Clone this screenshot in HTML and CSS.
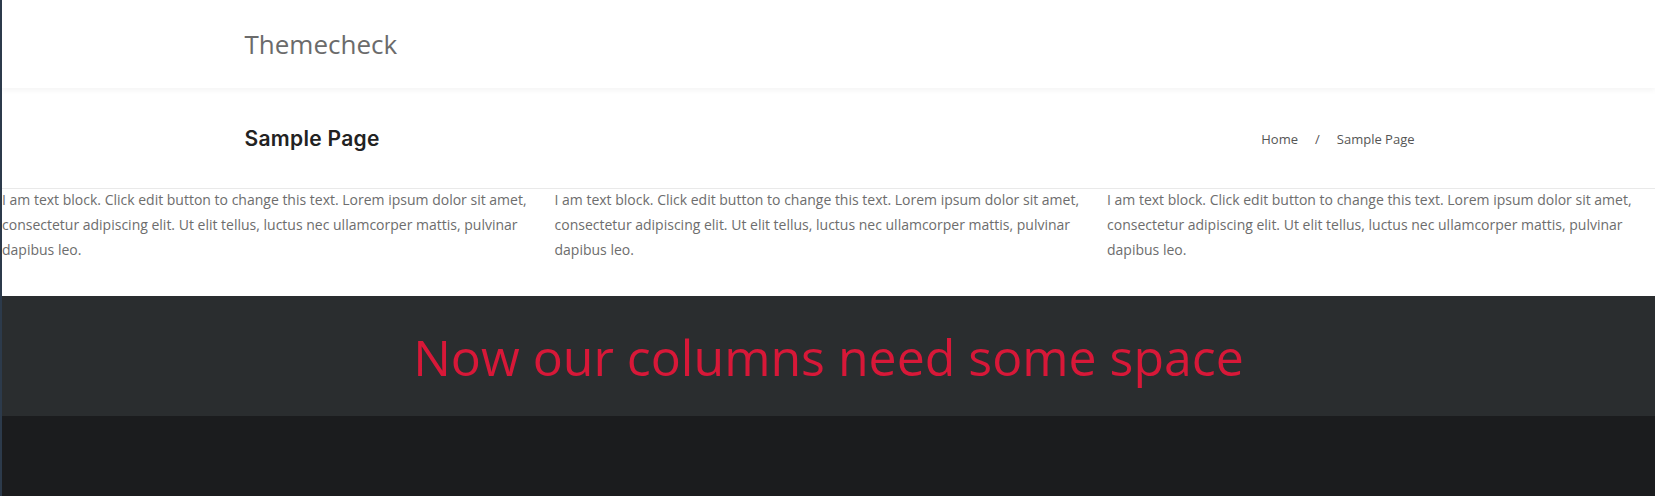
FILE: index.html
```html
<!DOCTYPE html>
<html lang="en">
<head>
  <meta charset="UTF-8">
  <meta name="viewport" content="width=device-width, initial-scale=1.0">
  <title>Sample Page – Themecheck</title>
  <link rel="stylesheet" href="styles.css">
</head>
<body>

  <header class="site-header">
    <div class="container">
      <a class="site-title" href="#">Themecheck</a>
    </div>
  </header>

  <section class="page-title">
    <div class="container title-row">
      <h1>Sample Page</h1>
      <nav class="breadcrumb">
        <a href="#">Home</a>
        <span class="sep">/</span>
        <span>Sample Page</span>
      </nav>
    </div>
  </section>

  <section class="text-columns">
    <div class="col">
      <p>I am text block. Click edit button to change this text. Lorem ipsum dolor sit amet, consectetur adipiscing elit. Ut elit tellus, luctus nec ullamcorper mattis, pulvinar dapibus leo.</p>
    </div>
    <div class="col">
      <p>I am text block. Click edit button to change this text. Lorem ipsum dolor sit amet, consectetur adipiscing elit. Ut elit tellus, luctus nec ullamcorper mattis, pulvinar dapibus leo.</p>
    </div>
    <div class="col">
      <p>I am text block. Click edit button to change this text. Lorem ipsum dolor sit amet, consectetur adipiscing elit. Ut elit tellus, luctus nec ullamcorper mattis, pulvinar dapibus leo.</p>
    </div>
  </section>

  <section class="banner">
    <h2>Now our columns need some space</h2>
  </section>

  <footer class="site-footer"></footer>

</body>
</html>
```

FILE: styles.css
```css
html {
  background-color: #1b1c1e;
}

body {
  margin: 0;
  padding: 0;
  min-height: 100vh;
  border-left: 2px solid #2c3a4b;
  background-color: #1b1c1e;
  font-family: "Open Sans", Arial, sans-serif;
  color: #6d6d6d;
}

a {
  color: inherit;
  text-decoration: none;
}

.container {
  width: 1170px;
  margin: 0 auto;
  padding-left: 2px;
}

/* header */
.site-header {
  position: relative;
  z-index: 2;
  height: 88px;
  display: flex;
  align-items: center;
  background: #fff;
  box-shadow: 0 2px 6px rgba(0, 0, 0, 0.05);
}

.site-title {
  font-size: 26px;
  line-height: 36px;
  color: #6b6b6b;
}

/* page title bar */
.page-title {
  background: #fff;
  border-bottom: 1px solid #e9e9e9;
}

.title-row {
  height: 100px;
  display: flex;
  justify-content: space-between;
  align-items: center;
}

.title-row h1 {
  margin: 0;
  font-family: Inter, "Noto Sans", sans-serif;
  font-size: 21px;
  font-weight: 600;
  letter-spacing: 0.3px;
  color: #222;
}

.breadcrumb {
  display: flex;
  align-items: center;
  gap: 17px;
  font-size: 13px;
  color: #555;
  padding-top: 2px;
}

/* text columns */
.text-columns {
  display: grid;
  grid-template-columns: repeat(3, 1fr);
  column-gap: 4.5px;
  background: #fff;
  padding: 0 0 34px;
}

.col p {
  margin: -2px 0 0;
  font-size: 14px;
  line-height: 25px;
  color: #6d6d6d;
}

/* banner */
.banner {
  background: #2a2d2f;
  padding: 27px 0 24px;
  text-align: center;
}

.banner h2 {
  margin: 0;
  font-size: 50px;
  font-weight: 400;
  line-height: 69px;
  color: #d71838;
}

.site-footer {
  background: #1b1c1e;
}
```
